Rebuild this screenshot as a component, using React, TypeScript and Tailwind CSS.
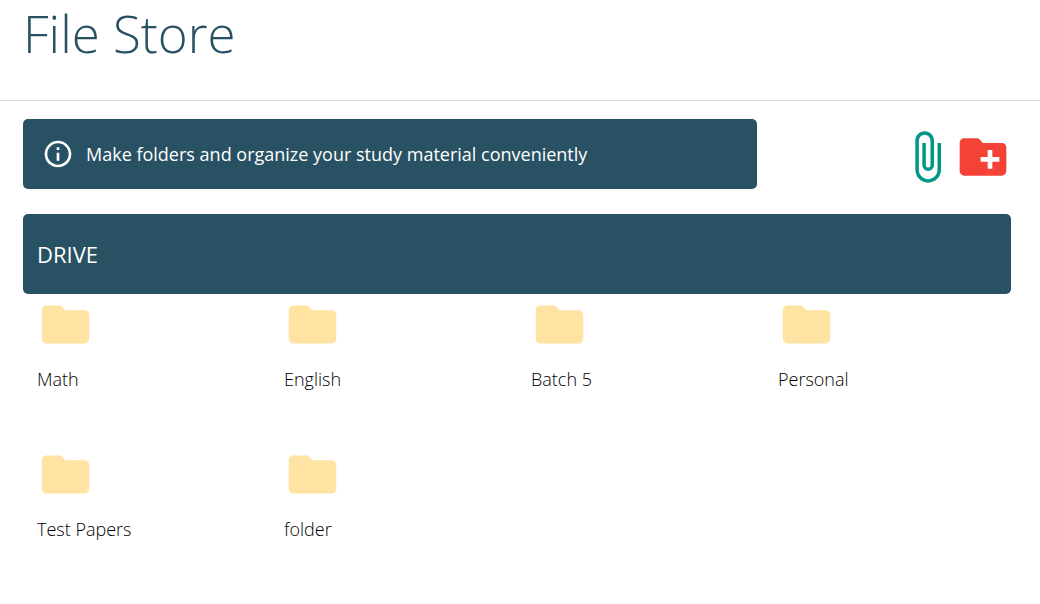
import React from "react";
import {
  MdAttachFile,
  MdCreateNewFolder,
  MdFolder,
  MdInfoOutline,
} from "react-icons/md";

interface Folder {
  id: number;
  name: string;
}

const folders: Folder[] = [
  { id: 1, name: "Math" },
  { id: 2, name: "English" },
  { id: 3, name: "Batch 5" },
  { id: 4, name: "Personal" },
  { id: 5, name: "Test Papers" },
  { id: 6, name: "folder" },
];

export default function App() {
  return (
    <div className="min-h-screen bg-white font-['Open_Sans',sans-serif] text-lg text-[#212529]">
      <header className="h-[101px] border-b border-[#dcdcdc] px-[23px]">
        <h1 className="text-[51px] leading-[66px] font-light text-[#285163]">
          File Store
        </h1>
      </header>

      <main className="pt-[18px] pr-[29px] pl-[23px]">
        <div className="flex items-center justify-between">
          <div className="flex h-[70px] w-[74.3%] items-center gap-3 rounded-[5px] bg-[#285163] px-[19px] text-white">
            <MdInfoOutline className="h-8 w-8 shrink-0" />
            <p>Make folders and organize your study material conveniently</p>
          </div>

          <div className="flex pt-[6px]">
            <button type="button" aria-label="Upload file" className="text-[#009688]">
              <MdAttachFile className="h-14 w-14" />
            </button>
            <button type="button" aria-label="New folder" className="text-[#f44336]">
              <MdCreateNewFolder className="h-14 w-14" />
            </button>
          </div>
        </div>

        <section className="mt-[25px]">
          <h2 className="flex h-20 items-center rounded-[5px] bg-[#285163] px-[14px] text-[22px] text-white">
            DRIVE
          </h2>

          <div className="grid grid-cols-4 pt-[2px]">
            {folders.map((folder) => (
              <div key={folder.id} className="h-[150px] px-[14px]">
                <button type="button" className="flex flex-col items-start gap-3 text-left">
                  <MdFolder className="h-[57px] w-[57px] text-[#ffe3a2]" />
                  <span className="font-light text-black">{folder.name}</span>
                </button>
              </div>
            ))}
          </div>
        </section>
      </main>
    </div>
  );
}
